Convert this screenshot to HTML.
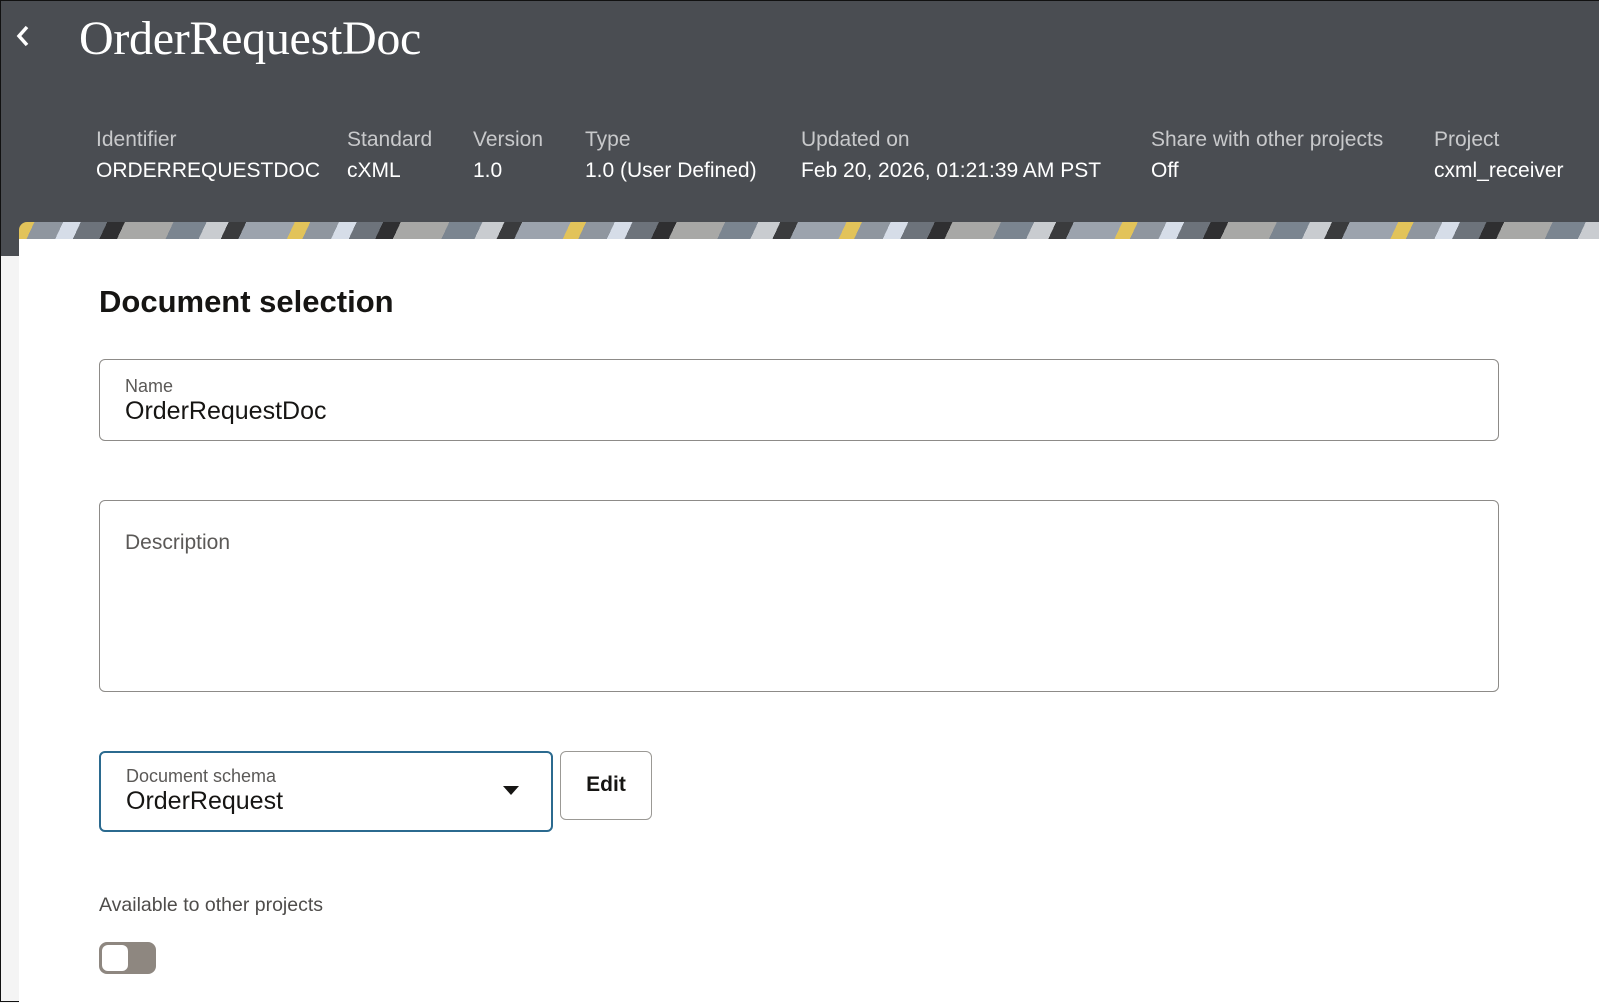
<!DOCTYPE html>
<html><head><meta charset="utf-8"><style>
*{box-sizing:border-box;margin:0;padding:0}
body{width:1599px;height:1002px;overflow:hidden;background:#f4f4f4;font-family:"Liberation Sans",sans-serif;position:relative;border:1px solid #111}
.hdr{position:absolute;left:0;top:0;width:1599px;height:255px;background:#4a4d52}
.back{position:absolute;left:14px;top:22px}
.title{position:absolute;left:78px;top:10px;font-family:"Liberation Serif",serif;font-size:48px;color:#fff;letter-spacing:-0.3px}
.meta{position:absolute;top:127px;font-size:21px;color:#fff;white-space:nowrap}
.meta .l{color:#c8c9cb;margin-bottom:7px}
.banner{position:absolute;left:18px;top:221px;width:1581px;height:18px;border-radius:8px 0 0 0;
background:repeating-linear-gradient(115deg,#e2c35a 0 14px,#8f969f 14px 40px,#d6dde8 40px 56px,#6d737b 56px 80px,#2f2f31 80px 96px,#a8a8a6 96px 140px,#7b8590 140px 170px,#c9ccd0 170px 190px,#3a3b3d 190px 206px,#9ca3ad 206px 250px)}
.card{position:absolute;left:18px;top:238px;width:1581px;height:764px;background:#fff}
h2{position:absolute;left:98px;top:283px;font-size:31px;font-weight:bold;color:#161513}
.box{position:absolute;border:1px solid #8d8b88;border-radius:6px;background:#fff}
.lab{position:absolute;left:25px;font-size:18px;color:#5b5957}
.val{position:absolute;left:25px;font-size:25px;color:#161513}
</style></head><body>
<div class="hdr"></div>
<svg class="back" width="16" height="26" viewBox="0 0 16 26"><path d="M12 4 L4 13 L12 22" stroke="#fff" stroke-width="3.5" fill="none"/></svg>
<div class="title">OrderRequestDoc</div>
<div class="meta" style="left:95px"><div class="l">Identifier</div><div>ORDERREQUESTDOC</div></div>
<div class="meta" style="left:346px"><div class="l">Standard</div><div>cXML</div></div>
<div class="meta" style="left:472px"><div class="l">Version</div><div>1.0</div></div>
<div class="meta" style="left:584px"><div class="l">Type</div><div>1.0 (User Defined)</div></div>
<div class="meta" style="left:800px"><div class="l">Updated on</div><div>Feb 20, 2026, 01:21:39 AM PST</div></div>
<div class="meta" style="left:1150px"><div class="l">Share with other projects</div><div>Off</div></div>
<div class="meta" style="left:1433px"><div class="l">Project</div><div>cxml_receiver</div></div>
<div class="banner"></div>
<div class="card"></div>
<h2>Document selection</h2>
<div class="box" style="left:98px;top:358px;width:1400px;height:82px"><div class="lab" style="top:16px">Name</div><div class="val" style="top:37px">OrderRequestDoc</div></div>
<div class="box" style="left:98px;top:499px;width:1400px;height:192px"><div class="lab" style="top:30px;font-size:21px">Description</div></div>
<div class="box" style="left:98px;top:750px;width:454px;height:81px;border:2px solid #2b6a8f"><div class="lab" style="top:13px">Document schema</div><div class="val" style="top:34px">OrderRequest</div>
<svg style="position:absolute;left:402px;top:33px" width="16" height="10"><path d="M0 0 L16 0 L8 9Z" fill="#161513"/></svg></div>
<div class="box" style="left:559px;top:750px;width:92px;height:69px;border-color:#9b9995"><div style="position:absolute;left:0;right:0;top:21px;text-align:center;font-size:21px;font-weight:bold;color:#161513">Edit</div></div>
<div style="position:absolute;left:98px;top:893px;font-size:19.5px;color:#4f4d4b">Available to other projects</div>
<div style="position:absolute;left:98px;top:941px;width:57px;height:32px;border-radius:8px;background:#8e8780"><div style="position:absolute;left:3px;top:3px;width:26px;height:26px;border-radius:6px;background:#fff"></div></div>
</body></html>
